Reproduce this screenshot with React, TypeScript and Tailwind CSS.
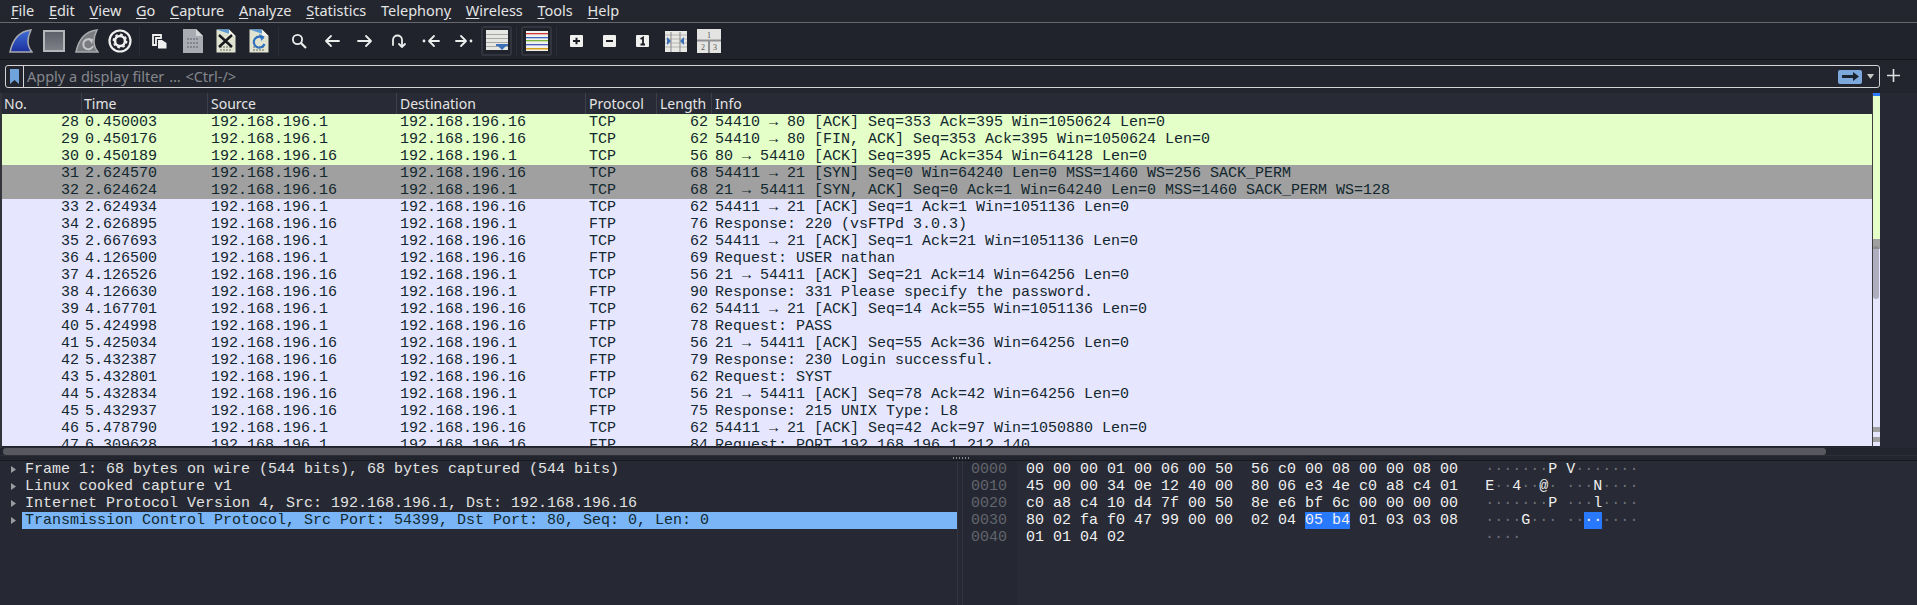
import React from 'react';

const menus: [string, string, string][] = [
  ['', 'F', 'ile'], ['', 'E', 'dit'], ['', 'V', 'iew'], ['', 'G', 'o'], ['', 'C', 'apture'], ['', 'A', 'nalyze'],
  ['', 'S', 'tatistics'], ['Telephon', 'y', ''], ['', 'W', 'ireless'], ['', 'T', 'ools'], ['', 'H', 'elp'],
];

type Row = [number, string, string, string, string, number, string];
const A = '192.168.196.1';
const B = '192.168.196.16';
const rows: Row[] = [
  [28, '0.450003', A, B, 'TCP', 62, '54410 → 80 [ACK] Seq=353 Ack=395 Win=1050624 Len=0'],
  [29, '0.450176', A, B, 'TCP', 62, '54410 → 80 [FIN, ACK] Seq=353 Ack=395 Win=1050624 Len=0'],
  [30, '0.450189', B, A, 'TCP', 56, '80 → 54410 [ACK] Seq=395 Ack=354 Win=64128 Len=0'],
  [31, '2.624570', A, B, 'TCP', 68, '54411 → 21 [SYN] Seq=0 Win=64240 Len=0 MSS=1460 WS=256 SACK_PERM'],
  [32, '2.624624', B, A, 'TCP', 68, '21 → 54411 [SYN, ACK] Seq=0 Ack=1 Win=64240 Len=0 MSS=1460 SACK_PERM WS=128'],
  [33, '2.624934', A, B, 'TCP', 62, '54411 → 21 [ACK] Seq=1 Ack=1 Win=1051136 Len=0'],
  [34, '2.626895', B, A, 'FTP', 76, 'Response: 220 (vsFTPd 3.0.3)'],
  [35, '2.667693', A, B, 'TCP', 62, '54411 → 21 [ACK] Seq=1 Ack=21 Win=1051136 Len=0'],
  [36, '4.126500', A, B, 'FTP', 69, 'Request: USER nathan'],
  [37, '4.126526', B, A, 'TCP', 56, '21 → 54411 [ACK] Seq=21 Ack=14 Win=64256 Len=0'],
  [38, '4.126630', B, A, 'FTP', 90, 'Response: 331 Please specify the password.'],
  [39, '4.167701', A, B, 'TCP', 62, '54411 → 21 [ACK] Seq=14 Ack=55 Win=1051136 Len=0'],
  [40, '5.424998', A, B, 'FTP', 78, 'Request: PASS'],
  [41, '5.425034', B, A, 'TCP', 56, '21 → 54411 [ACK] Seq=55 Ack=36 Win=64256 Len=0'],
  [42, '5.432387', B, A, 'FTP', 79, 'Response: 230 Login successful.'],
  [43, '5.432801', A, B, 'FTP', 62, 'Request: SYST'],
  [44, '5.432834', B, A, 'TCP', 56, '21 → 54411 [ACK] Seq=78 Ack=42 Win=64256 Len=0'],
  [45, '5.432937', B, A, 'FTP', 75, 'Response: 215 UNIX Type: L8'],
  [46, '5.478790', A, B, 'TCP', 62, '54411 → 21 [ACK] Seq=42 Ack=97 Win=1050880 Len=0'],
  [47, '6.309628', A, B, 'FTP', 84, 'Request: PORT 192,168,196,1,212,140'],
];

const rowColor = (no: number) => {
  if (no <= 30) return 'bg-[#e4ffc7]';
  if (no <= 32) return 'bg-[#a0a0a0]';
  return 'bg-[#e7e6ff]';
};

const details = [
  'Frame 1: 68 bytes on wire (544 bits), 68 bytes captured (544 bits)',
  'Linux cooked capture v1',
  'Internet Protocol Version 4, Src: 192.168.196.1, Dst: 192.168.196.16',
  'Transmission Control Protocol, Src Port: 54399, Dst Port: 80, Seq: 0, Len: 0',
];

const hexRows: [string, string, string, string, string][] = [
  ['0000', '00 00 00 01 00 06 00 50', '56 c0 00 08 00 00 08 00', '·······P', 'V·······'],
  ['0010', '45 00 00 34 0e 12 40 00', '80 06 e3 4e c0 a8 c4 01', 'E··4··@·', '···N····'],
  ['0020', 'c0 a8 c4 10 d4 7f 00 50', '8e e6 bf 6c 00 00 00 00', '·······P', '···l····'],
  ['0030', '80 02 fa f0 47 99 00 00', '02 04 05 b4 01 03 03 08', '····G···', '········'],
  ['0040', '01 01 04 02', '', '····', ''],
];

const Ascii = ({ text }: { text: string }) => (
  <>
    {text.split('').map((c, i) => (
      <span key={i} className={c === '·' ? 'text-[#6d7078]' : 'text-[#f0f0f0]'}>{c}</span>
    ))}
  </>
);

const Slot = ({ children, boxed }: { children: React.ReactNode; boxed?: boolean }) => (
  <div className={`w-[33px] h-[30px] flex items-center justify-center shrink-0 ${boxed ? 'border-2 border-[#32353e] rounded-[3px] mx-[1px] !w-[31px]' : ''}`}>
    {children}
  </div>
);

const Sep = () => (
  <div className="w-[7px] h-[30px] flex justify-center shrink-0"><div className="w-px h-full bg-[#2a2d36]" /></div>
);

const Fin = ({ fill, id }: { fill: [string, string]; id: string }) => (
  <svg width="24" height="25" viewBox="0 0 24 25">
    <defs>
      <linearGradient id={id} x1="0" y1="0" x2="0" y2="1">
        <stop offset="0" stopColor={fill[0]} />
        <stop offset="1" stopColor={fill[1]} />
      </linearGradient>
    </defs>
    <path d="M22 1 C12 2 4 9 1 23 L23 23 C18 17 18 9 22 1 Z" fill={`url(#${id})`} stroke="#a9abb0" strokeWidth="1.5" />
  </svg>
);

const Doc = ({ children }: { children?: React.ReactNode }) => (
  <svg width="20" height="24" viewBox="0 0 20 24">
    <path d="M0.5 0.5 H13 L19.5 7 V23.5 H0.5 Z" fill="#dfe3cf" />
    <path d="M0.5 0.5 H13 V7 H19.5" fill="#5a9bd8" />
    <path d="M13 0.5 L19.5 7 H13 Z" fill="#f3f3ea" />
    <path d="M4 18 H16 M4 21 H16" stroke="#8f9488" strokeWidth="1.5" strokeDasharray="2 1" />
    {children}
  </svg>
);

const ArrowIcon = ({ d, dots }: { d: string; dots?: [number, number] }) => (
  <svg width="18" height="16" viewBox="0 0 18 16" fill="none" stroke="#eceded" strokeWidth="1.8" strokeLinecap="round" strokeLinejoin="round">
    <path d={d} />
    {dots && <circle cx={dots[0]} cy={dots[1]} r="1.4" fill="#eceded" stroke="none" />}
  </svg>
);

const ZoomIcon = ({ children }: { children: React.ReactNode }) => (
  <svg width="13" height="12" viewBox="0 0 13 12">
    <rect width="13" height="12" rx="1" fill="#f0f0ee" />
    {children}
  </svg>
);

const App: React.FC = () => {
  const noto = { fontFamily: '"Noto Sans", sans-serif' };
  return (
    <div className="w-[1917px] h-[605px] overflow-hidden flex flex-col bg-[#262933] text-[#e4e4e4]" style={noto}>
      {/* メニューバー */}
      <div className="h-[23px] flex items-center gap-[14.7px] pl-[11px] pb-[3px] text-[14.5px] bg-[#23262f] border-b border-[#66686e] shrink-0">
        {menus.map(([a, u, b]) => (
          <span key={a + u + b} className="leading-[20px]">
            {a}<span className="underline underline-offset-2">{u}</span>{b}
          </span>
        ))}
      </div>

      {/* ツールバー */}
      <div className="h-[37px] flex items-center pl-[4px] bg-[#20232c] border-b border-[#14161b] shrink-0">
        <Slot><Fin id="fin-a" fill={['#3f6fd8', '#1c2f9c']} /></Slot>
        <Slot>
          <div className="w-[22px] h-[22px] border-2 border-[#b4b6ba] bg-gradient-to-b from-[#5d6068] to-[#7d8087]" />
        </Slot>
        <Slot>
          <svg width="24" height="25" viewBox="0 0 24 25">
            <path d="M22 1 C12 2 4 9 1 23 L23 23 C18 17 18 9 22 1 Z" fill="#797b80" stroke="#a9abb0" strokeWidth="1.5" />
            <path d="M17 12 A5 5 0 1 0 18 17" fill="none" stroke="#c4c6c9" strokeWidth="2" />
            <path d="M13 9 L18 10 L17 15 Z" fill="#c4c6c9" />
          </svg>
        </Slot>
        <Slot>
          <svg width="24" height="24" viewBox="0 0 24 24" fill="none">
            <circle cx="12" cy="12" r="10.5" stroke="#f0f0f0" strokeWidth="2.2" />
            <circle cx="12" cy="12" r="5" stroke="#f0f0f0" strokeWidth="2.6" />
            <circle cx="12" cy="12" r="6.7" stroke="#f0f0f0" strokeWidth="1.4" strokeDasharray="2.6 2.66" />
          </svg>
        </Slot>
        <Sep />
        <Slot>
          <svg width="15" height="15" viewBox="0 0 15 15">
            <path d="M1 1 H9 V4 H4 V11 H1 Z" fill="none" stroke="#f0f0f0" strokeWidth="1.8" />
            <path d="M6 6 H10 L14.5 9 V14.5 H6 Z" fill="#f0f0f0" />
          </svg>
        </Slot>
        <Slot>
          <svg width="20" height="24" viewBox="0 0 20 24">
            <path d="M0 0 H13 L20 7 V24 H0 Z" fill="#a9acb2" />
            <path d="M13 0 L20 7 H13 Z" fill="#d3d5d8" />
            <path d="M4 10 H16 M4 14 H16 M4 18 H16" stroke="#83868c" strokeWidth="2" strokeDasharray="2 1" />
          </svg>
        </Slot>
        <Slot>
          <Doc><path d="M3 6 L16 18 M16 6 L3 18" stroke="#16181c" strokeWidth="2.4" /></Doc>
        </Slot>
        <Slot>
          <Doc>
            <path d="M14.5 9.5 A5.5 5.5 0 1 0 15.5 15" fill="none" stroke="#2f6fc0" strokeWidth="2.2" />
            <path d="M10 5 L15.5 7.5 L12.5 12 Z" fill="#2f6fc0" />
          </Doc>
        </Slot>
        <Sep />
        <Slot>
          <svg width="16" height="16" viewBox="0 0 16 16" fill="none" stroke="#eceded" strokeWidth="1.8">
            <circle cx="6.5" cy="6.5" r="4.6" />
            <path d="M10 10 L15 15" strokeWidth="2.2" />
          </svg>
        </Slot>
        <Slot><ArrowIcon d="M16 8 H3 M8 3 L3 8 L8 13" /></Slot>
        <Slot><ArrowIcon d="M2 8 H15 M10 3 L15 8 L10 13" /></Slot>
        <Slot><ArrowIcon d="M4 12 V7 C4 1 13 1 13 7 V14 M10 11 L13 14 L16 11" /></Slot>
        <Slot><ArrowIcon d="M17 8 H8 M12 3 L7 8 L12 13" dots={[2, 8]} /></Slot>
        <Slot><ArrowIcon d="M1 8 H10 M6 3 L11 8 L6 13" dots={[16, 8]} /></Slot>
        <Slot boxed>
          <svg width="22" height="22" viewBox="0 0 22 22">
            <rect width="22" height="20" fill="#e6e6e2" />
            <path d="M0 4.5 H22 M0 8.5 H22 M0 12.5 H22 M0 16.5 H22" stroke="#a6a8a6" />
            <path d="M10 14 H22 L16 20 Z" fill="#3b70b8" />
            <rect x="10" y="14" width="12" height="2" fill="#3b70b8" />
          </svg>
        </Slot>
        <Sep />
        <Slot boxed>
          <svg width="22" height="20" viewBox="0 0 22 20">
            <rect width="22" height="20" fill="#f0f0ec" />
            <rect y="2" width="22" height="1.3" fill="#d0383a" />
            <rect y="6" width="22" height="1.3" fill="#3d66c8" />
            <rect y="9" width="22" height="1.3" fill="#7cb53a" />
            <rect y="13" width="22" height="1.3" fill="#4a5dc0" />
            <rect y="17" width="22" height="1.5" fill="#d8a018" />
          </svg>
        </Slot>
        <Sep />
        <Slot>
          <ZoomIcon><path d="M3 6 H10 M6.5 2.8 V9.2" stroke="#1c1e24" strokeWidth="2" /></ZoomIcon>
        </Slot>
        <Slot>
          <ZoomIcon><path d="M3 6 H10" stroke="#1c1e24" strokeWidth="2" /></ZoomIcon>
        </Slot>
        <Slot>
          <ZoomIcon><path d="M4.5 4 L7 2.6 V9.5 M4.5 9.5 H9" stroke="#1c1e24" strokeWidth="1.8" fill="none" /></ZoomIcon>
        </Slot>
        <Slot>
          <svg width="22" height="21" viewBox="0 0 22 21">
            <rect width="22" height="21" fill="#e8e8e4" />
            <path d="M0 4 H22 M0 8 H22 M0 12 H22 M0 16 H22" stroke="#b4b6b4" />
            <path d="M6 1 V21 M15 1 V21" stroke="#85878a" strokeWidth="1" />
            <path d="M2 6 L6 10 L2 14 Z M19 6 L15 10 L19 14 Z" fill="#3b70b8" />
          </svg>
        </Slot>
        <Slot>
          <svg width="24" height="24" viewBox="0 0 24 24">
            <rect width="24" height="24" fill="#e4e4e2" />
            <path d="M0 11.5 H24 M12 11.5 V24" stroke="#8d8f92" strokeWidth="2" />
            <text x="12" y="9" fontSize="8" textAnchor="middle" fill="#555" fontFamily="Liberation Serif">1</text>
            <text x="6" y="21" fontSize="8" textAnchor="middle" fill="#555" fontFamily="Liberation Serif">2</text>
            <text x="18" y="21" fontSize="8" textAnchor="middle" fill="#555" fontFamily="Liberation Serif">3</text>
          </svg>
        </Slot>
      </div>

      {/* 表示フィルター */}
      <div className="h-[33px] flex items-start pt-[5px] pl-[5px] bg-[#22252e] shrink-0">
        <div className="w-[1875px] h-[23px] flex items-center border border-[#d4d4d6] rounded-[3px]">
          <div className="w-[18px] h-full flex items-center justify-center border-r border-[#d4d4d6] shrink-0">
            <svg width="9" height="15" viewBox="0 0 9 15"><path d="M0 0 H9 V15 L4.5 11 L0 15 Z" fill="#6fa3dc" /></svg>
          </div>
          <span className="ml-[3px] text-[14.5px] text-[#85878d]">Apply a display filter <span className="mx-[1px]">…</span> &lt;Ctrl-/&gt;</span>
          <div className="ml-auto w-[24px] h-[14px] bg-[#7ca8dc] rounded-[2px] flex items-center justify-center">
            <svg width="17" height="9" viewBox="0 0 17 9"><path d="M0 3 H11 V0 L17 4.5 L11 9 V6 H0 Z" fill="#1c2430" /></svg>
          </div>
          <svg className="mx-[5px]" width="7" height="5" viewBox="0 0 7 5"><path d="M0 0 H7 L3.5 5 Z" fill="#c8c8c8" /></svg>
        </div>
        <svg className="ml-[7px] mt-[4px]" width="13" height="13" viewBox="0 0 13 13"><path d="M6.5 0 V13 M0 6.5 H13" stroke="#e0e0e0" strokeWidth="1.6" /></svg>
      </div>

      {/* パケット一覧 */}
      <div className="h-[355px] flex shrink-0">
        <div className="w-[1872px] flex flex-col border-l-2 border-[#32343a] shrink-0">
          <div className="h-[21px] flex items-center text-[14px] bg-[#282b35] shrink-0">
            <div className="w-[79px] pl-[2px] shrink-0">No.</div>
            <div className="w-[126px] pl-[2px] border-l border-[#3d4049] shrink-0">Time</div>
            <div className="w-[189px] pl-[3px] border-l border-[#3d4049] shrink-0">Source</div>
            <div className="w-[189px] pl-[3px] border-l border-[#3d4049] shrink-0">Destination</div>
            <div className="w-[71px] pl-[3px] border-l border-[#3d4049] shrink-0">Protocol</div>
            <div className="w-[55px] pl-[3px] border-l border-[#3d4049] shrink-0">Length</div>
            <div className="pl-[3px] border-l border-[#3d4049]">Info</div>
          </div>
          <div className="h-[333px] overflow-hidden border-b border-[#22242a] font-['Liberation_Mono',monospace] text-[15px] leading-[17px] text-[#12272e] bg-[#e7e6ff]">
            {rows.map(r => (
              <div key={r[0]} className={`h-[17px] flex whitespace-pre ${rowColor(r[0])}`}>
                <div className="w-[77px] text-right shrink-0">{r[0]}</div>
                <div className="w-[128px] pl-[6px] shrink-0">{r[1]}</div>
                <div className="w-[189px] pl-[4px] shrink-0">{r[2]}</div>
                <div className="w-[189px] pl-[4px] shrink-0">{r[3]}</div>
                <div className="w-[71px] pl-[4px] shrink-0">{r[4]}</div>
                <div className="w-[52px] text-right shrink-0">{r[5]}</div>
                <div className="pl-[7px]">{r[6]}</div>
              </div>
            ))}
          </div>
        </div>
        {/* インテリジェントスクロールバー */}
        <div className="relative w-[8px] flex flex-col border-l border-[#3c3c3e] h-[354px] shrink-0">
          <div className="h-[3px] bg-[#2b7cff] shrink-0" />
          <div className="h-[143px] bg-[#e4ffc7] shrink-0" />
          <div className="h-[10px] bg-[#a0a0a0] shrink-0" />
          <div className="h-[178px] bg-[#e7e6ff] shrink-0" />
          <div className="h-[5px] bg-[#a0a0a0] shrink-0" />
          <div className="h-[5px] bg-[#e7e6ff] shrink-0" />
          <div className="h-[5px] bg-[#a0a0a0] shrink-0" />
          <div className="h-[4px] bg-[#e7e6ff] shrink-0" />
          <div className="absolute left-0 top-[153px] w-[6px] h-[53px] rounded-[3px] bg-[#75757f]/50" />
        </div>
      </div>

      {/* 横スクロールバー */}
      <div className="h-[13px] bg-[#22252e] border-b border-[#17191e] shrink-0 flex flex-col">
        <div className="h-[7px] ml-[3px] w-[1823px] rounded-[3px] bg-[#57595e]" />
        <div className="relative flex-1 border-t border-[#2c2f38]">
          <div className="absolute left-[953px] top-[1px] flex gap-[2px]">
            {[0, 1, 2, 3, 4, 5].map(i => <div key={i} className="w-px h-[2px] bg-[#8a8c90]" />)}
          </div>
        </div>
      </div>

      {/* 詳細ペイン / バイトペイン */}
      <div className="flex-1 flex min-h-0 font-['Liberation_Mono',monospace] text-[15px] leading-[17px] whitespace-pre">
        <div className="w-[958px] pl-[1px] border-r border-[#34363e] shrink-0">
          {details.map((d, i) => (
            <div key={d} className="h-[17px] flex items-center">
              <svg className="ml-[10px] w-[5px] shrink-0" width="5" height="7" viewBox="0 0 5 7"><path d="M0 0 L5 3.5 L0 7 Z" fill="#9a9ca0" /></svg>
              <div className={`ml-[6px] flex-1 pl-[3px] h-[17px] ${i === 3 ? 'bg-[#7ab6f7] text-[#12272e]' : 'text-[#e2e2e2]'}`}>{d}</div>
            </div>
          ))}
        </div>
        <div className="w-[5px] border-r border-[#34363e] shrink-0" />
        <div className="w-[54px] pl-[8px] bg-[#252832] text-[#62656c] shrink-0">
          {hexRows.map(h => <div key={h[0]} className="h-[17px]">{h[0]}</div>)}
        </div>
        <div className="flex-1 pl-[9px] bg-[#282b35] text-[#f0f0f0]">
          {hexRows.map(h => {
            const selected = h[0] === '0030';
            return (
              <div key={h[0]} className="h-[17px]">
                {h[1]}{h[2] && '  '}
                {selected ? (
                  <>02 04 <span className="bg-[#2979ff]">05 b4</span> 01 03 03 08</>
                ) : h[2]}
                {h[2] ? '   ' : ' '.repeat(51 - h[1].length)}
                <Ascii text={h[3]} />{h[4] && ' '}
                {selected ? (
                  <><Ascii text="··" /><span className="bg-[#2979ff]">··</span><Ascii text="····" /></>
                ) : <Ascii text={h[4]} />}
              </div>
            );
          })}
        </div>
      </div>
    </div>
  );
};

export default App;
